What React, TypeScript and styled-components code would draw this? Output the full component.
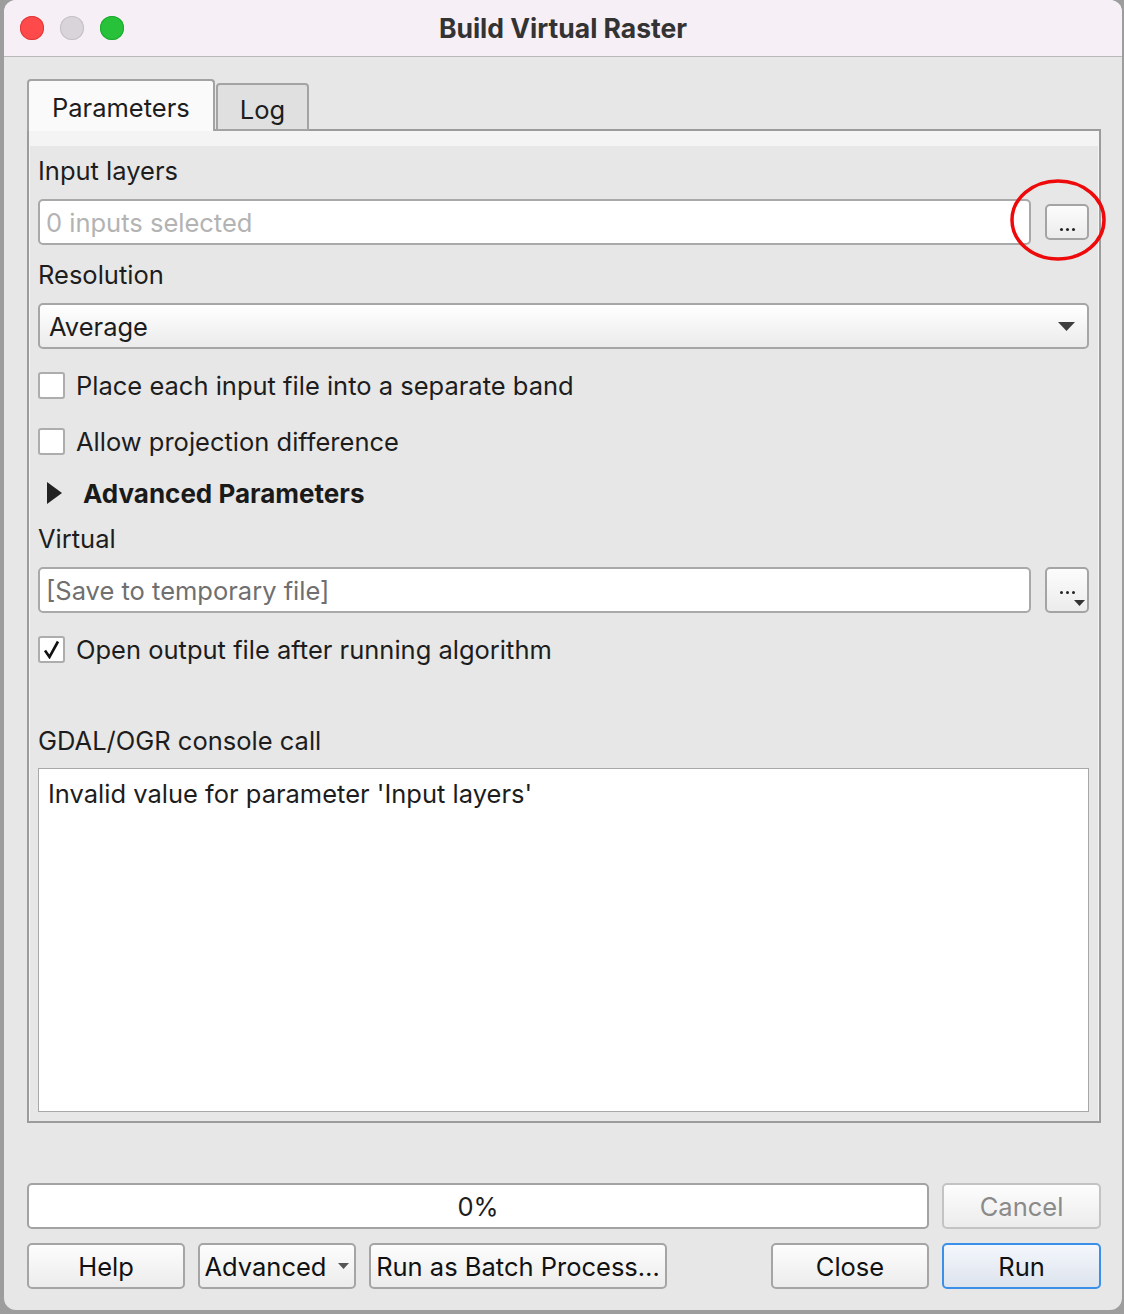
import React from "react";
import styled, { createGlobalStyle } from "styled-components";

const GlobalStyle = createGlobalStyle`
  html, body {
    margin: 0;
    padding: 0;
    background: #9d9d9d;
  }
  body {
    font-family: Inter, "Liberation Sans", Arial, sans-serif;
    color: #1d1d1d;
  }
`;

const Page = styled.div`
  width: 1124px;
  height: 1314px;
  padding-left: 4px;
  box-sizing: border-box;
`;

const Window = styled.div`
  width: 1118px;
  height: 1310px;
  background: #e7e7e7;
  border-radius: 12px;
  overflow: hidden;
  display: flex;
  flex-direction: column;
`;

const TitleBar = styled.div`
  height: 56px;
  flex: none;
  background: #f6eff6;
  border-bottom: 1px solid #b9b9b9;
  display: flex;
  align-items: center;
  position: relative;
`;

const Lights = styled.div`
  display: flex;
  gap: 16px;
  padding-left: 16px;
`;

const Light = styled.span<{ $color: string; $edge: string }>`
  width: 24px;
  height: 24px;
  border-radius: 50%;
  background: ${(p) => p.$color};
  box-shadow: inset 0 0 0 1px ${(p) => p.$edge};
`;

const Title = styled.div`
  position: absolute;
  left: 0;
  right: 0;
  text-align: center;
  font-size: 26.5px;
  font-weight: 700;
  color: #333;
  pointer-events: none;
`;

const Body = styled.div`
  flex: 1;
  display: flex;
  flex-direction: column;
  padding: 22px 21px 21px 23px;
`;

const TabBar = styled.div`
  display: flex;
  align-items: flex-end;
  height: 52px;
  position: relative;
  z-index: 1;
  margin-bottom: -2px;
`;

const Tab = styled.div<{ $active?: boolean }>`
  box-sizing: border-box;
  height: ${(p) => (p.$active ? 52 : 48)}px;
  padding: 0 ${(p) => (p.$active ? 23 : 22)}px;
  display: flex;
  align-items: center;
  font-size: 25.5px;
  background: ${(p) => (p.$active ? "#fafafa" : "#e0e0e0")};
  border: 2px solid #a3a3a3;
  border-bottom: ${(p) => (p.$active ? "none" : "2px solid #a3a3a3")};
  border-radius: 4px 4px 0 0;
  margin-right: 1px;
  padding-top: ${(p) => (p.$active ? 2 : 5)}px;
`;

const Pane = styled.div`
  height: 994px;
  box-sizing: border-box;
  border: 2px solid #9c9c9c;
  background: #f4f4f4;
  padding: 15px 1px 0 1px;
  display: flex;
  flex-direction: column;
`;

const Scroll = styled.div`
  flex: 1;
  background: #e7e7e7;
  padding: 8px 9px 0 8px;
  display: flex;
  flex-direction: column;
`;

const Label = styled.div<{ $gap?: number }>`
  font-size: 25.5px;
  line-height: 34px;
  height: 34px;
  margin-top: ${(p) => p.$gap ?? 0}px;
  white-space: nowrap;
`;

const FieldRow = styled.div<{ $gap: number }>`
  display: flex;
  align-items: center;
  gap: 14px;
  margin-top: ${(p) => p.$gap}px;
  position: relative;
`;

const TextField = styled.div<{ $tone: string }>`
  flex: 1;
  height: 46px;
  box-sizing: border-box;
  background: #fff;
  border: 2px solid #a9a9a9;
  border-radius: 5px;
  padding: 0 6px;
  display: flex;
  align-items: center;
  font-size: 25.5px;
  color: ${(p) => p.$tone};
`;

const SmallButton = styled.div<{ $tall?: boolean }>`
  width: 44px;
  height: ${(p) => (p.$tall ? 46 : 36)}px;
  box-sizing: border-box;
  border: 2px solid #a4a4a4;
  border-radius: 5px;
  background: linear-gradient(#fcfcfc, #ececec);
  position: relative;
`;

const Dots = styled.span<{ $top: number; $left: number }>`
  position: absolute;
  top: ${(p) => p.$top}px;
  left: ${(p) => p.$left}px;
  display: flex;
  gap: 3px;
  & > i {
    width: 3px;
    height: 3px;
    border-radius: 50%;
    background: #222;
  }
`;

const CornerArrow = styled.svg`
  position: absolute;
  right: 2px;
  bottom: 5px;
`;

const Ring = styled.svg`
  position: absolute;
  left: 970px;
  top: -22px;
  pointer-events: none;
`;

const Select = styled.div`
  height: 46px;
  box-sizing: border-box;
  margin-top: 11px;
  border: 2px solid #a6a6a6;
  border-radius: 5px;
  background: linear-gradient(#ffffff, #ebebeb);
  display: flex;
  align-items: center;
  justify-content: space-between;
  padding: 0 12px 0 9px;
  font-size: 25.5px;
`;

const CheckRow = styled.div<{ $gap: number }>`
  display: flex;
  align-items: center;
  gap: 11px;
  height: 36px;
  margin-top: ${(p) => p.$gap}px;
  font-size: 25.5px;
  white-space: nowrap;
`;

const Box = styled.span`
  width: 27px;
  height: 27px;
  box-sizing: border-box;
  background: #fff;
  border: 2px solid #adadad;
  border-radius: 3px;
  display: flex;
  align-items: center;
  justify-content: center;
`;

const Section = styled.div`
  display: flex;
  align-items: center;
  gap: 21px;
  height: 36px;
  margin-top: 16px;
  padding-left: 9px;
  font-size: 26px;
  font-weight: 700;
  color: #1a1a1a;
`;

const Console = styled.div`
  height: 344px;
  box-sizing: border-box;
  margin-top: 10px;
  background: #fff;
  border: 1px solid #a8a8a8;
  padding: 9px 9px;
  font-size: 25.5px;
  line-height: 32px;
`;

const Footer = styled.div`
  margin-top: 60px;
  display: flex;
  flex-direction: column;
  gap: 14px;
`;

const FooterRow = styled.div`
  display: flex;
  gap: 13px;
`;

const Progress = styled.div`
  width: 902px;
  height: 46px;
  box-sizing: border-box;
  background: #fff;
  border: 2px solid #a3a3a3;
  border-radius: 5px;
  display: flex;
  align-items: center;
  justify-content: center;
  font-size: 25.5px;
`;

const Button = styled.div<{ $w: number; $primary?: boolean; $disabled?: boolean }>`
  width: ${(p) => p.$w}px;
  height: 46px;
  box-sizing: border-box;
  border: 2px solid ${(p) => (p.$primary ? "#3a8fe9" : p.$disabled ? "#c3c3c3" : "#a5a5a5")};
  border-radius: 5px;
  background: ${(p) =>
    p.$primary ? "linear-gradient(#f4f7fc, #dde3ed)" : "linear-gradient(#fdfdfd, #ececec)"};
  display: flex;
  align-items: center;
  justify-content: center;
  gap: 12px;
  font-size: 25.5px;
  color: ${(p) => (p.$disabled ? "#8a8a8a" : "#111")};
  white-space: nowrap;
`;

const Spacer = styled.div`
  flex: 1;
`;

const DownArrow = ({ w, h, color }: { w: number; h: number; color: string }) => (
  <svg width={w} height={h} viewBox={`0 0 ${w} ${h}`}>
    <polygon points={`0,0 ${w},0 ${w / 2},${h}`} fill={color} />
  </svg>
);

const Check = () => (
  <svg width="17" height="19" viewBox="0 0 17 19">
    <path d="M2 10.5 L6.5 17 L15 1.5" fill="none" stroke="#111" strokeWidth="2.6" strokeLinejoin="miter" />
  </svg>
);

export default function App() {
  return (
    <Page>
      <GlobalStyle />
      <Window>
        <TitleBar>
          <Lights>
            <Light $color="#fe4a4b" $edge="#e0393a" />
            <Light $color="#d8d4d9" $edge="#c4c0c5" />
            <Light $color="#27c13a" $edge="#1faa30" />
          </Lights>
          <Title>Build Virtual Raster</Title>
        </TitleBar>
        <Body>
          <TabBar>
            <Tab $active>Parameters</Tab>
            <Tab>Log</Tab>
          </TabBar>
          <Pane>
            <Scroll>
              <Label>Input layers</Label>
              <FieldRow $gap={11}>
                <TextField $tone="#b3b3b3">0 inputs selected</TextField>
                <SmallButton>
                  <Dots $top={22} $left={13}>
                    <i />
                    <i />
                    <i />
                  </Dots>
                </SmallButton>
                <Ring width="100" height="86" viewBox="0 0 100 86">
                  <ellipse cx="50" cy="43" rx="46" ry="39" fill="none" stroke="#ee0a0a" strokeWidth="3.5" />
                </Ring>
              </FieldRow>
              <Label $gap={13}>Resolution</Label>
              <Select>
                <span>Average</span>
                <DownArrow w={17} h={9} color="#3e3e3e" />
              </Select>
              <CheckRow $gap={18}>
                <Box />
                Place each input file into a separate band
              </CheckRow>
              <CheckRow $gap={20}>
                <Box />
                Allow projection difference
              </CheckRow>
              <Section>
                <svg width="15" height="22" viewBox="0 0 15 22">
                  <polygon points="0,0 15,11 0,22" fill="#222" />
                </svg>
                Advanced Parameters
              </Section>
              <Label $gap={11}>Virtual</Label>
              <FieldRow $gap={11}>
                <TextField $tone="#6f6f6f">[Save to temporary file]</TextField>
                <SmallButton $tall>
                  <Dots $top={22} $left={13}>
                    <i />
                    <i />
                    <i />
                  </Dots>
                  <CornerArrow width="11" height="6" viewBox="0 0 11 6">
                    <polygon points="0,0 11,0 5.5,6" fill="#333" />
                  </CornerArrow>
                </SmallButton>
              </FieldRow>
              <CheckRow $gap={18}>
                <Box>
                  <Check />
                </Box>
                Open output file after running algorithm
              </CheckRow>
              <Label $gap={57}>GDAL/OGR console call</Label>
              <Console>Invalid value for parameter 'Input layers'</Console>
            </Scroll>
          </Pane>
          <Footer>
            <FooterRow>
              <Progress>0%</Progress>
              <Button $w={159} $disabled>
                Cancel
              </Button>
            </FooterRow>
            <FooterRow>
              <Button $w={158}>Help</Button>
              <Button $w={158}>
                Advanced
                <DownArrow w={11} h={6} color="#555" />
              </Button>
              <Button $w={298}>Run as Batch Process…</Button>
              <Spacer />
              <Button $w={158}>Close</Button>
              <Button $w={159} $primary>
                Run
              </Button>
            </FooterRow>
          </Footer>
        </Body>
      </Window>
    </Page>
  );
}
